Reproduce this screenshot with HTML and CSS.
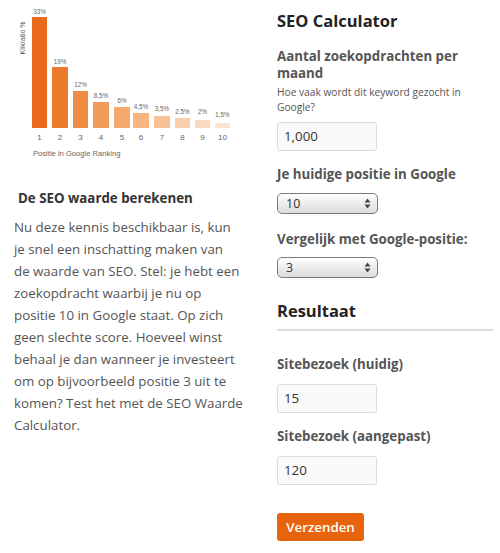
FILE: index.html
```html
<!DOCTYPE html>
<html lang="nl">
<head>
<meta charset="utf-8">
<title>SEO Calculator</title>
<link rel="stylesheet" href="styles.css">
</head>
<body>
<div class="page">
  <div class="left">
    <svg class="chart" width="250" height="165" viewBox="0 0 250 165" xmlns="http://www.w3.org/2000/svg">
      <text class="ylabel" transform="translate(25,38) rotate(-90)" text-anchor="middle">Klikratio %</text>
      <rect x="32" y="17" width="15" height="111" fill="#e96a1a"/>
      <rect x="52" y="67" width="16" height="61" fill="#ed7b2e"/>
      <rect x="73" y="91" width="15" height="37" fill="#f08b42"/>
      <rect x="93" y="102" width="16" height="26" fill="#f29a57"/>
      <rect x="114" y="107" width="16" height="21" fill="#f4a86c"/>
      <rect x="133" y="113" width="16" height="15" fill="#f6b581"/>
      <rect x="154" y="116" width="16" height="12" fill="#f8c296"/>
      <rect x="175" y="118" width="15" height="10" fill="#faceab"/>
      <rect x="195" y="120" width="15" height="8" fill="#fbd9bf"/>
      <rect x="215" y="123" width="15" height="5" fill="#fce3d0"/>
      <g class="pct" text-anchor="middle">
        <text x="39.5" y="14">33%</text>
        <text x="60" y="64">19%</text>
        <text x="80.5" y="87">12%</text>
        <text x="101" y="98">8,5%</text>
        <text x="122" y="103">6%</text>
        <text x="141" y="109">4,5%</text>
        <text x="162" y="111">3,5%</text>
        <text x="182.5" y="114">2,5%</text>
        <text x="202.5" y="114">2%</text>
        <text x="222.5" y="117">1,5%</text>
      </g>
      <g class="ax" text-anchor="middle">
        <text x="39.5" y="140">1</text>
        <text x="60" y="140">2</text>
        <text x="80.5" y="140">3</text>
        <text x="101" y="140">4</text>
        <text x="122" y="140">5</text>
        <text x="141" y="140">6</text>
        <text x="162" y="140">7</text>
        <text x="182.5" y="140">8</text>
        <text x="202.5" y="140">9</text>
        <text x="222.5" y="140">10</text>
      </g>
      <text class="xlabel" x="33" y="156">Positie in Google Ranking</text>
    </svg>
    <h3 class="intro-title">De SEO waarde berekenen</h3>
    <p class="intro">Nu deze kennis beschikbaar is, kun<br>je snel een inschatting maken van<br>de waarde van SEO. Stel: je hebt een<br>zoekopdracht waarbij je nu op<br>positie 10 in Google staat. Op zich<br>geen slechte score. Hoeveel winst<br>behaal je dan wanneer je investeert<br>om op bijvoorbeeld positie 3 uit te<br>komen? Test het met de SEO Waarde<br>Calculator.</p>
  </div>
  <div class="right">
    <h2 class="title">SEO Calculator</h2>
    <div class="label label-first">Aantal zoekopdrachten per maand</div>
    <div class="hint">Hoe vaak wordt dit keyword gezocht in Google?</div>
    <div class="input input-first">1,000</div>
    <div class="label label-sel1">Je huidige positie in Google</div>
    <div class="select"><span>10</span>
      <svg width="7" height="11" viewBox="0 0 7 11"><path d="M3.5 0.5 L6.5 4.5 L0.5 4.5 Z M3.5 10.5 L6.5 6.5 L0.5 6.5 Z" fill="#444"/></svg>
    </div>
    <div class="label label-sel2">Vergelijk met Google-positie:</div>
    <div class="select select-2"><span>3</span>
      <svg width="7" height="11" viewBox="0 0 7 11"><path d="M3.5 0.5 L6.5 4.5 L0.5 4.5 Z M3.5 10.5 L6.5 6.5 L0.5 6.5 Z" fill="#444"/></svg>
    </div>
    <h2 class="title result">Resultaat</h2>
    <hr class="rule">
    <div class="label label-res">Sitebezoek (huidig)</div>
    <div class="input">15</div>
    <div class="label label-res2">Sitebezoek (aangepast)</div>
    <div class="input">120</div>
    <button class="btn">Verzenden</button>
  </div>
</div>
</body>
</html>
```
FILE: styles.css
```css
html, body {
  margin: 0;
  padding: 0;
  background: #fff;
}
body {
  font-family: "Open Sans", "Noto Sans", sans-serif;
  color: #555;
  width: 500px;
  height: 553px;
  overflow: hidden;
}
.page {
  display: flex;
}
.left {
  width: 277px;
  flex: none;
}
.chart {
  display: block;
}
.chart text {
  font-family: "Liberation Sans", Arial, sans-serif;
  fill: #666;
}
.chart .ylabel { font-size: 7px; fill: #555; }
.chart .pct text { font-size: 6.3px; }
.chart .ax text { font-size: 8px; }
.chart .xlabel { font-size: 7.6px; }
.intro-title {
  margin: 24px 0 0 18px;
  font-size: 13.3px;
  line-height: 18px;
  font-weight: 700;
  color: #333;
}
.intro {
  margin: 9px 0 0 14px;
  font-size: 13.3px;
  line-height: 22px;
  color: #555;
  white-space: nowrap;
}
.right {
  flex: 1;
  padding-right: 7px;
}
.title {
  margin: 9px 0 0;
  font-size: 16.5px;
  line-height: 24px;
  font-weight: 700;
  color: #222;
}
.label {
  font-size: 13.3px;
  font-weight: 700;
  line-height: 17px;
  color: #555;
}
.label-first { margin-top: 15px; }
.hint {
  font-size: 10.2px;
  line-height: 15px;
  color: #555;
  margin-top: 3px;
}
.input {
  box-sizing: border-box;
  width: 100px;
  height: 29px;
  border: 1px solid #dcdcdc;
  border-radius: 3px;
  background: #fafafa;
  font-size: 13.3px;
  line-height: 27px;
  padding-left: 6px;
  color: #333;
  margin-top: 11px;
}
.input-first { margin-top: 7px; }
.label-sel1 { margin-top: 14.5px; }
.label-sel2 { margin-top: 16.5px; }
.select {
  box-sizing: border-box;
  width: 101px;
  height: 21px;
  margin-top: 10.5px;
  border: 1px solid #7a7a7a;
  border-radius: 5px;
  background: linear-gradient(#ffffff, #e9e9e9 60%, #dcdcdc);
  display: flex;
  align-items: center;
  justify-content: space-between;
  padding: 0 6px 0 8px;
  font-size: 12.5px;
  color: #333;
}
.select-2 { margin-top: 9.5px; }
.result { margin-top: 21px; }
.rule {
  margin: 6px 0 0;
  border: 0;
  height: 2px;
  background: #dcdcdc;
}
.label-res { margin-top: 24.5px; }
.label-res2 { margin-top: 15.5px; }
.btn {
  display: block;
  margin-top: 28px;
  width: 87px;
  height: 28px;
  border: 0;
  border-radius: 3px;
  background: #e8640c;
  color: #fff;
  font-family: "Open Sans", "Noto Sans", sans-serif;
  font-size: 13.3px;
  font-weight: 600;
  padding: 0;
}
```
